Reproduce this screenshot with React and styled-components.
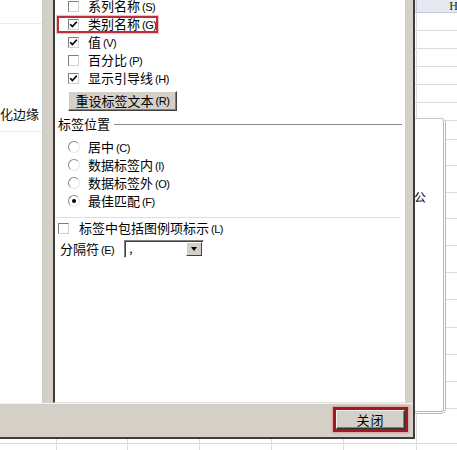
import * as React from "react";
import styled, { createGlobalStyle, css } from "styled-components";

const ROW_LINES = [13, 31, 49, 67, 85, 103, 121, 140, 166, 193, 219, 246, 273, 300, 328, 355, 382, 409, 444, 470];
const COLUMNS = [
  { label: "B", width: 57 },
  { label: "C", width: 71 },
  { label: "D", width: 72 },
  { label: "E", width: 72 },
  { label: "F", width: 72 },
  { label: "G", width: 73 },
  { label: "H", width: 72 },
];

const LABEL_OPTIONS = [
  { text: "系列名称", key: "S", checked: false },
  { text: "类别名称", key: "G", checked: true, highlight: true },
  { text: "值", key: "V", checked: true },
  { text: "百分比", key: "P", checked: false },
  { text: "显示引导线", key: "H", checked: true },
];

const POSITIONS = [
  { text: "居中", key: "C" },
  { text: "数据标签内", key: "I" },
  { text: "数据标签外", key: "O" },
  { text: "最佳匹配", key: "F", selected: true },
];

const GlobalStyle = createGlobalStyle`
  html, body {
    margin: 0;
    padding: 0;
    background: #ffffff;
  }
  body {
    font-family: "Noto Sans CJK SC", "Liberation Sans", sans-serif;
    font-size: 13px;
    color: #000;
  }
`;

const Screen = styled("div")`
  position: relative;
  width: 457px;
  height: 450px;
  overflow: hidden;
  background: #fff;
`;

/* ---------- spreadsheet behind the dialog ---------- */

const Sheet = styled("div")`
  display: flex;
  flex-flow: column nowrap;
`;

const HeaderRow = styled("div")`
  display: flex;
  height: 13px;
  background: #e6e9f1;
  border-bottom: 1px solid #c4cad8;
  box-sizing: border-box;
`;

const HeaderCell = styled("div")`
  flex: 0 0 ${({ $w }) => $w}px;
  box-sizing: border-box;
  border-right: 1px solid #c4cad8;
  text-align: center;
  font-family: "Liberation Serif", serif;
  font-size: 12px;
  line-height: 12px;
  padding-left: 2px;
  color: #222;
`;

const SheetRow = styled("div")`
  display: flex;
  height: ${({ $h }) => $h}px;
  border-bottom: 1px solid #dcdcdc;
  box-sizing: border-box;
`;

const SheetCell = styled("div")`
  flex: 0 0 ${({ $w }) => $w}px;
  box-sizing: border-box;
  border-right: 1px solid #dcdcdc;
`;

const ChartObject = styled("div")`
  position: absolute;
  left: 300px;
  top: 118px;
  width: 146px;
  height: 296px;
  box-sizing: border-box;
  background: #fff;
  border: 1px solid #c6c6c6;
  border-right: 3px double #b8b8b8;
  border-bottom: 3px double #b8b8b8;
  border-radius: 5px;
`;

const ChartText = styled("span")`
  position: absolute;
  left: 113px;
  top: 71px;
  font-size: 12px;
  line-height: 14px;
`;

/* ---------- dialog window ---------- */

const Window = styled("div")`
  position: absolute;
  left: 0;
  top: 0;
  width: 415px;
  display: flex;
  flex-flow: column nowrap;
  background: #d4d0c8;
  border-right: 2px solid #3c3c3c;
  border-bottom: 2px solid #3c3c3c;
  box-sizing: border-box;
`;

const Body = styled("div")`
  display: flex;
  height: 403px;
  padding-right: 8px;
`;

const NavPane = styled("div")`
  width: 42px;
  background: #fff;
  border-right: 1px solid #c9c9c9;
  margin-right: 10px;
  display: flex;
  flex-flow: column nowrap;
  overflow: hidden;
`;

const NavItem = styled("div")`
  height: ${({ $h }) => $h}px;
  flex: 0 0 auto;
  border-bottom: 1px solid #ececec;
  box-sizing: border-box;
  display: flex;
  align-items: flex-end;
  padding-bottom: 9px;
  white-space: nowrap;
  font-size: 13px;
  line-height: 16px;
  color: #111;
`;

const Panel = styled("div")`
  width: 350px;
  background: #fff;
  border-left: 2px solid #3c3c3c;
  border-bottom: 1px solid #e4e2dc;
  display: flex;
  flex-flow: column nowrap;
`;

const CheckList = styled("div")`
  display: flex;
  flex-flow: column nowrap;
  margin-top: -3px;
`;

const OptionRow = styled("label")`
  position: relative;
  display: flex;
  align-items: center;
  height: 18px;
  padding-left: ${({ $indent }) => $indent ?? 13}px;
  gap: ${({ $gap }) => $gap ?? 8}px;
  white-space: nowrap;
  line-height: 16px;

  ${({ $highlight }) =>
    $highlight &&
    css`
      &::before {
        content: "";
        position: absolute;
        left: 2px;
        top: 1px;
        width: 101px;
        height: 17px;
        box-sizing: border-box;
        border: 2px solid #b92f3a;
        box-shadow: 0 0 1px 1px rgba(220, 120, 130, 0.45);
      }
    `}
`;

const Box = styled("span")`
  flex: 0 0 auto;
  width: 11px;
  height: 11px;
  box-sizing: border-box;
  background: #fff;
  border: 1px solid;
  border-color: #7e7e7e #cfcfcf #cfcfcf #7e7e7e;
  display: flex;
  align-items: center;
  justify-content: center;
`;

const Radio = styled("span")`
  flex: 0 0 auto;
  width: 12px;
  height: 12px;
  box-sizing: border-box;
  border-radius: 50%;
  background: #fff;
  border: 1px solid;
  border-color: #8a8a8a #e6e6e6 #e6e6e6 #8a8a8a;
  display: flex;
  align-items: center;
  justify-content: center;

  &::after {
    content: "";
    width: 4px;
    height: 4px;
    border-radius: 50%;
    background: ${({ $on }) => ($on ? "#000" : "transparent")};
  }
`;

const Key = styled("span")`
  font-family: "Liberation Sans", sans-serif;
  font-size: 11px;
  margin-left: 2px;
  letter-spacing: -0.5px;
`;

const ClassicButton = styled("button")`
  font: inherit;
  font-size: 13px;
  color: #000;
  background: #d4d0c8;
  border: 1px solid;
  border-color: #ffffff #404040 #404040 #ffffff;
  box-shadow: inset -1px -1px 0 #808080;
  padding: 0;
  display: flex;
  align-items: center;
  justify-content: center;
  line-height: 16px;
  white-space: nowrap;
`;

const ResetButton = styled(ClassicButton)`
  align-self: flex-start;
  margin: 4px 0 0 13px;
  width: 109px;
  height: 20px;
`;

const GroupHeader = styled("div")`
  display: flex;
  align-items: center;
  height: 14px;
  margin-top: 6px;
  padding-left: 3px;
  margin-right: 3px;
  gap: 4px;
  line-height: 14px;

  &::after {
    content: "";
    flex: 1;
    height: 0;
    border-top: 1px solid #8c8c8c;
  }
`;

const RadioList = styled("div")`
  display: flex;
  flex-flow: column nowrap;
  margin-top: 7px;
`;

const Divider = styled("div")`
  margin: 7px 5px 0 0;
  border-top: 1px solid #dedede;
`;

const FieldRow = styled("div")`
  display: flex;
  align-items: center;
  height: 20px;
  margin-top: 2px;
  padding-left: 5px;
  gap: 10px;
  line-height: 16px;
`;

const Combo = styled("div")`
  width: 80px;
  height: 18px;
  box-sizing: border-box;
  display: flex;
  align-items: stretch;
  border: 1px solid;
  border-color: #808080 #ffffff #ffffff #808080;
  box-shadow: inset 1px 1px 0 #404040;
  background: #fff;
`;

const ComboValue = styled("span")`
  flex: 1;
  padding-left: 4px;
  font-size: 12px;
  line-height: 14px;
`;

const ComboArrow = styled("span")`
  flex: 0 0 16px;
  margin: 1px;
  box-sizing: border-box;
  background: #d4d0c8;
  border: 1px solid;
  border-color: #ffffff #404040 #404040 #ffffff;
  display: flex;
  align-items: center;
  justify-content: center;

  &::after {
    content: "";
    border-left: 3.5px solid transparent;
    border-right: 3.5px solid transparent;
    border-top: 4px solid #000;
  }
`;

const Footer = styled("div")`
  height: 34px;
  display: flex;
  justify-content: flex-end;
  align-items: flex-start;
  padding: 3px 5px 0 0;
  box-sizing: border-box;
  border-top: 1px solid #f4f3ef;
`;

const CloseFrame = styled("div")`
  width: 75px;
  height: 25px;
  box-sizing: border-box;
  border: 3px solid #9e1a22;
  box-shadow: 0 0 2px 1px rgba(230, 110, 120, 0.55);
  display: flex;
`;

const CloseButton = styled(ClassicButton)`
  flex: 1;
  border-color: #f0f0f0 #303030 #303030 #f0f0f0;
  letter-spacing: 1px;
`;

const Check = () => (
  <svg width="9" height="9" viewBox="0 0 9 9">
    <path d="M1.2 4.2 L3.4 6.6 L7.8 1.8" fill="none" stroke="#000" strokeWidth="1.7" />
  </svg>
);

const Sheetgrid = () => {
  let prev = 13;
  return (
    <Sheet>
      <HeaderRow>
        {COLUMNS.map((c) => (
          <HeaderCell key={c.label} $w={c.width}>
            {c.label}
          </HeaderCell>
        ))}
      </HeaderRow>
      {ROW_LINES.slice(1).map((y) => {
        const h = y - prev;
        prev = y;
        return (
          <SheetRow key={y} $h={h}>
            {COLUMNS.map((c) => (
              <SheetCell key={c.label} $w={c.width} />
            ))}
          </SheetRow>
        );
      })}
    </Sheet>
  );
};

export default function App() {
  return (
    <>
      <GlobalStyle />
      <Screen>
        <Sheetgrid />
        <ChartObject>
          <ChartText>公</ChartText>
        </ChartObject>

        <Window>
          <Body>
            <NavPane>
              <NavItem $h={24} />
              <NavItem $h={108}>化边缘</NavItem>
            </NavPane>

            <Panel>
              <CheckList>
                {LABEL_OPTIONS.map((o) => (
                  <OptionRow key={o.key} $highlight={o.highlight} $gap={9}>
                    <Box>{o.checked && <Check />}</Box>
                    <span>
                      {o.text}
                      <Key>({o.key})</Key>
                    </span>
                  </OptionRow>
                ))}
              </CheckList>

              <ResetButton>
                重设标签文本<Key>(R)</Key>
              </ResetButton>

              <GroupHeader>标签位置</GroupHeader>
              <RadioList>
                {POSITIONS.map((p) => (
                  <OptionRow key={p.key} $gap={8}>
                    <Radio $on={p.selected} />
                    <span>
                      {p.text}
                      <Key>({p.key})</Key>
                    </span>
                  </OptionRow>
                ))}
              </RadioList>

              <Divider />

              <OptionRow $indent={3} $gap={10} style={{ marginTop: 1 }}>
                <Box />
                <span>
                  标签中包括图例项标示<Key>(L)</Key>
                </span>
              </OptionRow>

              <FieldRow>
                <span>
                  分隔符<Key>(E)</Key>
                </span>
                <Combo>
                  <ComboValue>,</ComboValue>
                  <ComboArrow />
                </Combo>
              </FieldRow>
            </Panel>
          </Body>

          <Footer>
            <CloseFrame>
              <CloseButton>关闭</CloseButton>
            </CloseFrame>
          </Footer>
        </Window>
      </Screen>
    </>
  );
}
